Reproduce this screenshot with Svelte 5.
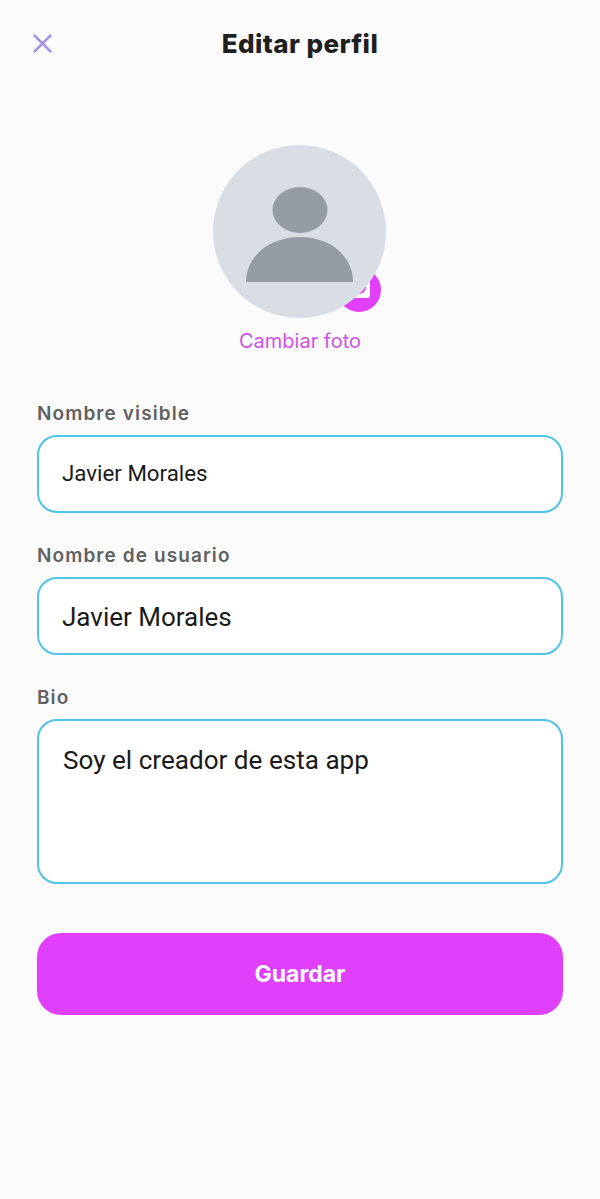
<script>
  const fields = [
    { label: "Nombre visible", value: "Javier Morales", size: "small" },
    { label: "Nombre de usuario", value: "Javier Morales", size: "big" },
  ];
</script>

<div class="screen">
  <header class="bar">
    <button class="close" aria-label="Cerrar">
      <svg viewBox="0 0 24 24" width="24" height="24">
        <path d="M3 3 L21 21 M21 3 L3 21" />
      </svg>
    </button>
    <h1>Editar perfil</h1>
  </header>

  <section class="photo">
    <div class="avatar-wrap">
      <div class="badge">
        <svg viewBox="0 0 44 44" width="44" height="44">
          <rect x="10" y="8" width="23" height="22" rx="3" fill="#fff" />
          <circle cx="22" cy="19" r="6" fill="none" stroke="#e040fb" stroke-width="2" />
        </svg>
      </div>
      <div class="avatar">
        <svg viewBox="0 0 173 173" width="173" height="173">
          <ellipse cx="87" cy="65" rx="27.5" ry="23" />
          <path d="M33 137 C33 111 57 92 87 92 C117 92 140 111 140 137 Z" />
        </svg>
      </div>
    </div>
    <span class="change">Cambiar foto</span>
  </section>

  <form class="form">
    {#each fields as f}
      <div class="field">
        <span class="label">{f.label}</span>
        <div class="input {f.size}">{f.value}</div>
      </div>
    {/each}
    <div class="field">
      <span class="label">Bio</span>
      <div class="input bio">Soy el creador de esta app</div>
    </div>
    <button type="button" class="save">Guardar</button>
  </form>
</div>

<style>
  :global(body) {
    background: #fbfbfc;
  }

  .screen {
    height: 1199px;
    background: #fbfbfc;
    overflow: hidden;
    font-family: Inter, sans-serif;
  }

  .bar {
    position: relative;
    display: flex;
    justify-content: center;
    align-items: center;
    padding-top: 26px;
    height: 36px;
  }

  .bar h1 {
    margin: 0;
    font-size: 26px;
    font-weight: 800;
    letter-spacing: 0.4px;
    color: #1f1f1f;
    line-height: 36px;
  }

  .close {
    position: absolute;
    left: 31px;
    top: 32px;
    width: 23px;
    height: 23px;
    padding: 0;
    border: 0;
    background: none;
  }

  .close svg {
    display: block;
    width: 23px;
    height: 23px;
    fill: none;
    stroke: #a493e4;
    stroke-width: 2.7;
  }

  .photo {
    display: flex;
    flex-direction: column;
    align-items: center;
    margin-top: 83px;
  }

  .avatar-wrap {
    position: relative;
    width: 173px;
    height: 173px;
    margin-right: 1px;
  }

  .avatar {
    position: relative;
    width: 173px;
    height: 173px;
    border-radius: 50%;
    background: #d9dde4;
  }

  .avatar svg {
    display: block;
    fill: #969ca6;
  }

  .badge {
    position: absolute;
    left: 124px;
    top: 123px;
    width: 44px;
    height: 44px;
    border-radius: 50%;
    background: #e040fb;
  }

  .badge svg {
    display: block;
  }

  .change {
    margin-top: 10px;
    font-size: 20px;
    line-height: 26px;
    color: #cf52e6;
  }

  .form {
    display: flex;
    flex-direction: column;
    padding: 0 37px;
    margin-top: 48px;
  }

  .field {
    display: flex;
    flex-direction: column;
    margin-bottom: 31px;
  }

  .label {
    font-size: 19px;
    font-weight: 600;
    line-height: 24px;
    letter-spacing: 1.1px;
    color: #616161;
    margin-bottom: 9px;
  }

  .input {
    box-sizing: border-box;
    height: 78px;
    display: flex;
    align-items: center;
    padding: 0 23px;
    background: #fff;
    border: 2.5px solid #4fc3e8;
    border-radius: 20px;
    font-family: Roboto, sans-serif;
    color: #1a1a1a;
  }

  .input.small {
    font-size: 22.3px;
    padding-bottom: 2px;
  }

  .input.big {
    font-size: 26px;
    padding-top: 1px;
  }

  .input.bio {
    height: 165px;
    align-items: flex-start;
    padding: 23px 24px 0;
    font-size: 26.1px;
    line-height: 32px;
  }

  .save {
    margin-top: 18px;
    height: 82px;
    border: 0;
    border-radius: 24px;
    background: #e040fb;
    color: #fff;
    font-family: Inter, sans-serif;
    font-size: 23px;
    font-weight: 700;
  }
</style>
